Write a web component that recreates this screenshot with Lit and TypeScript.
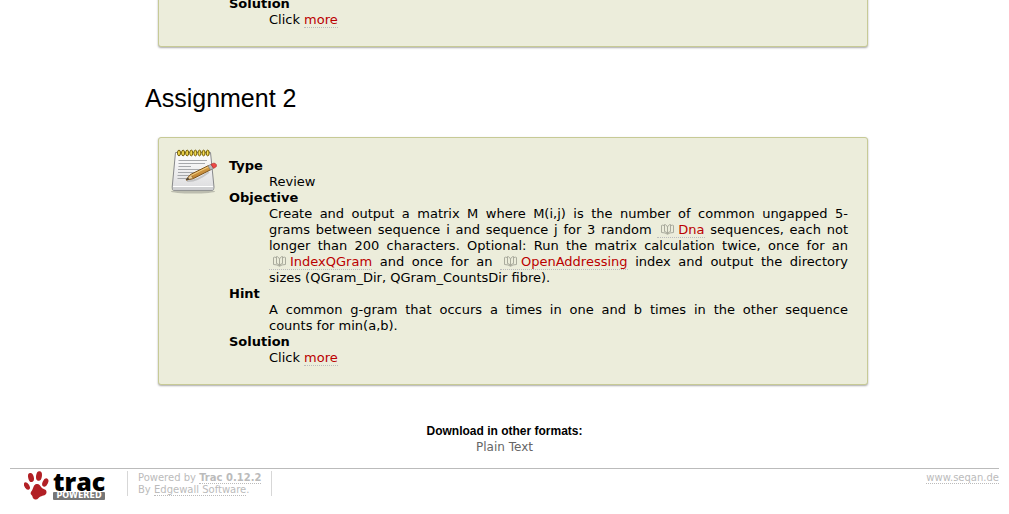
import { LitElement, html, css, svg } from "lit";
import { customElement, property } from "lit/decorators.js";

const textLink = css`
  a {
    color: #b00;
    text-decoration: none;
    border-bottom: 1px dotted #bbb;
  }
`;

@customElement("doc-link")
export class DocLink extends LitElement {
  @property() name = "";

  static styles = [
    textLink,
    css`
      a {
        white-space: nowrap;
        padding-left: 4px;
      }
      svg {
        width: 13px;
        height: 11px;
        margin-right: 4px;
        vertical-align: -1px;
      }
    `,
  ];

  render() {
    return html`<a href="#${this.name}"><svg viewBox="0 0 13 11" fill="none" stroke="#a9aa9c" aria-hidden="true">
      <path d="M6.500 3C5.500 1 4.500 .5 3.500 .5V7.500Q5.500 7.500 6.500 10Q7.500 7.500 9.500 7.500V.5C8.500 .5 7.500 1 6.500 3ZV10"/>
      <path d="M3 1.500Q1.500 .8 .5 1.500V8.500Q4.500 8.500 6.500 10.300Q8.500 8.500 12.500 8.500V1.500Q11.500 .8 10 1.500"/></svg>${this.name}</a>`;
  }
}

@customElement("assignment-card")
export class AssignmentCard extends LitElement {
  static styles = css`
    :host {
      display: flex;
      gap: 12px;
      margin-left: 13px;
      padding: 11px 19px 18px 12px;
      background: #eceddb;
      border: 1px solid #c7ca96;
      border-radius: 3px;
      box-shadow: 0 1px 2px #aaa;
    }
    svg {
      flex: none;
      width: 46px;
      height: 46px;
    }
    .body {
      flex: 1;
      min-width: 0;
      padding-top: 9px;
    }
  `;

  render() {
    return html`
      <svg viewBox="0 0 46 46" aria-hidden="true">
        <defs>
          <linearGradient id="paper" x1="0" y1="0" x2="0" y2="1">
            <stop offset="0" stop-color="#fff" />
            <stop offset="1" stop-color="#dcdcde" />
          </linearGradient>
          <linearGradient id="wood" x1="0" y1="0" x2=".4" y2="1">
            <stop offset="0" stop-color="#e8b65c" />
            <stop offset="1" stop-color="#b87a2c" />
          </linearGradient>
        </defs>
        <ellipse cx="22" cy="42.500" rx="22" ry="2" fill="#000" opacity=".2" />
        <path d="M4.500 3.500H39.500L43 38Q43 41.300 41.500 41.300H2.500Q1 41.300 1.200 38Z" fill="url(#paper)" stroke="#88898b" />
        <path d="M2 37.500H42.200L42.300 39.500Q42.300 40.600 41.500 40.600H2.700Q1.700 40.600 1.800 39.500Z" fill="#cfd0d2" />
        <path d="M2 37.500H42" stroke="#fff" />
        <path d="M7.500 11.500H36M7.500 14.500H34M7.500 17.500H20M7 20.500H32M7 23.500H27M6.500 26.500H22M6.500 29.500H16" stroke="#a6a8ab" />
        ${Array.from(
          { length: 8 },
          (_, i) => svg`<ellipse cx=${8 + i * 4.1} cy="4" rx="1.500" ry="2.900" fill="#e4c42c" stroke="#74600e"/>
            <path d="M${7.8 + i * 4.1} 2.500V5.500" stroke="#f8e66c" stroke-width=".9"/>`,
        )}
        <path d="M16 32Q25 33 38 23" stroke="#000" stroke-width="2" opacity=".15" fill="none" />
        <path d="M15 31L19.500 25.500L38 16.300L40.500 20.300L22.500 29.500Z" fill="url(#wood)" stroke="#7c531c" />
        <path d="M15 31L19.500 25.500L22.500 29.500Z" fill="#e9cc99" stroke="#7c531c" stroke-width=".7" />
        <path d="M15 31L17 28.500L18.200 30.300Z" fill="#333" />
        <path d="M20 26.500L38 17.500" stroke="#f4d183" />
        <path d="M37 16.800L40 15.300L42.500 19.300L39.500 20.900Z" fill="#b9bbbd" stroke="#77787a" stroke-width=".6" />
        <path d="M40 15.300L42.500 14.200Q44.500 13.800 45.400 15.700Q45.800 17.700 44.500 18.300L42.500 19.300Z" fill="#ee4a46" stroke="#a81f1c" stroke-width=".6" />
      </svg>
      <div class="body"><slot></slot></div>
    `;
  }
}

@customElement("site-footer")
export class SiteFooter extends LitElement {
  static styles = css`
    :host {
      display: flex;
      align-items: flex-start;
      margin: 13px 10px 0;
      padding-top: 2px;
      border-top: 1px solid #bbb;
      color: #bbb;
      font-size: 10px;
      line-height: 12px;
    }
    a {
      color: #bbb;
      text-decoration: none;
      border-bottom: 1px dotted #bbb;
    }
    p {
      margin: 0;
    }
    .logo {
      display: flex;
      gap: 4px;
      width: 103px;
      padding-left: 14px;
      border: 0;
    }
    .paw {
      width: 25px;
      height: 29px;
    }
    .word {
      display: flex;
      flex-direction: column;
      width: 52px;
    }
    .name {
      color: #000;
      font: 800 25px/21px "Open Sans", sans-serif;
    }
    .tag {
      background: #777;
      border-radius: 1px;
      color: #fff;
      font: bold 8px/8px "DejaVu Sans", sans-serif;
      text-align: center;
    }
    .credit {
      padding: 1px 10px 0;
      border-left: 1px solid #d7d7d7;
      border-right: 1px solid #d7d7d7;
    }
    .site {
      margin-left: auto;
      padding-top: 1px;
    }
  `;

  render() {
    return html`
      <a class="logo" href="#trac">
        <svg class="paw" viewBox="0 0 25 29" fill="#b22025" aria-hidden="true">
          <ellipse cx="7" cy="6.500" rx="2.800" ry="4.600" transform="rotate(-14 7 6.500)" />
          <ellipse cx="15" cy="5" rx="2.900" ry="4.700" transform="rotate(8 15 5)" />
          <ellipse cx="2.900" cy="15" rx="2.400" ry="4.100" transform="rotate(-32 2.900 15)" />
          <ellipse cx="21.300" cy="11.500" rx="2.700" ry="4.500" transform="rotate(24 21.300 11.500)" />
          <path d="M12.500 13C9.500 13.500 9.500 17 8 19.500C6.500 21.500 6 22.500 7.500 24C9 25 8 27.500 11 28.500C14 29 14.500 26.500 16.500 25.500C19 24.500 22.500 24.500 22.500 21C22.500 18 19.500 18.500 17.500 16.500C16 14.500 15 12.500 12.500 13Z" />
        </svg>
        <span class="word">
          <span class="name">trac</span>
          <span class="tag">POWERED</span>
        </span>
      </a>
      <p class="credit">
        Powered by <a href="#about"><strong>Trac 0.12.2</strong></a><br />
        By <a href="#edgewall">Edgewall Software</a>.
      </p>
      <p class="site"><a href="#seqan">www.seqan.de</a></p>
    `;
  }
}

@customElement("app-root")
export class AppRoot extends LitElement {
  static styles = [
    textLink,
    css`
      :host {
        display: flow-root;
        overflow: hidden;
        background: #fff;
        color: #000;
        font: 13px/16px Verdana, "DejaVu Sans", sans-serif;
      }
      main {
        margin-top: -85px;
        padding: 0 141px 0 145px;
      }
      h1 {
        margin: 36px 0 23px;
        font: 25px/31px "Liberation Sans", Arial, sans-serif;
      }
      dl,
      dd {
        margin: 0;
      }
      .previous {
        padding-top: 60px;
      }
      dt {
        font-weight: bold;
      }
      dd {
        padding-left: 40px;
        text-align: justify;
      }
      .line {
        display: block;
        text-align-last: justify;
      }
      .formats {
        margin-top: 38px;
        text-align: center;
        font-size: 12px;
      }
      h2 {
        margin: 0;
        font: bold 12px/16px "Liberation Sans", Arial, sans-serif;
      }
      .formats a {
        color: #666;
        border: 0;
      }
    `,
  ];

  render() {
    return html`
      <main>
        <assignment-card>
          <dl class="previous">
            <dt>Solution</dt>
            <dd>Click <a href="#solution1">more</a></dd>
          </dl>
        </assignment-card>
        <h1>Assignment 2</h1>
        <assignment-card>
          <dl>
            <dt>Type</dt>
            <dd>Review</dd>
            <dt>Objective</dt>
            <dd>
              <span class="line">Create and output a matrix M where M(i,j) is the number of common ungapped 5-</span>
              <span class="line">grams between sequence i and sequence j for 3 random <doc-link name="Dna"></doc-link> sequences, each not</span>
              <span class="line">longer than 200 characters. Optional: Run the matrix calculation twice, once for an</span>
              <span class="line"><doc-link name="IndexQGram"></doc-link> and once for an <doc-link name="OpenAddressing"></doc-link> index and output the directory</span>
              sizes (QGram_Dir, QGram_CountsDir fibre).
            </dd>
            <dt>Hint</dt>
            <dd>
              <span class="line">A common g-gram that occurs a times in one and b times in the other sequence</span>
              counts for min(a,b).
            </dd>
            <dt>Solution</dt>
            <dd>Click <a href="#solution2">more</a></dd>
          </dl>
        </assignment-card>
      </main>
      <section class="formats">
        <h2>Download in other formats:</h2>
        <a href="#txt">Plain Text</a>
      </section>
      <site-footer></site-footer>
    `;
  }
}
